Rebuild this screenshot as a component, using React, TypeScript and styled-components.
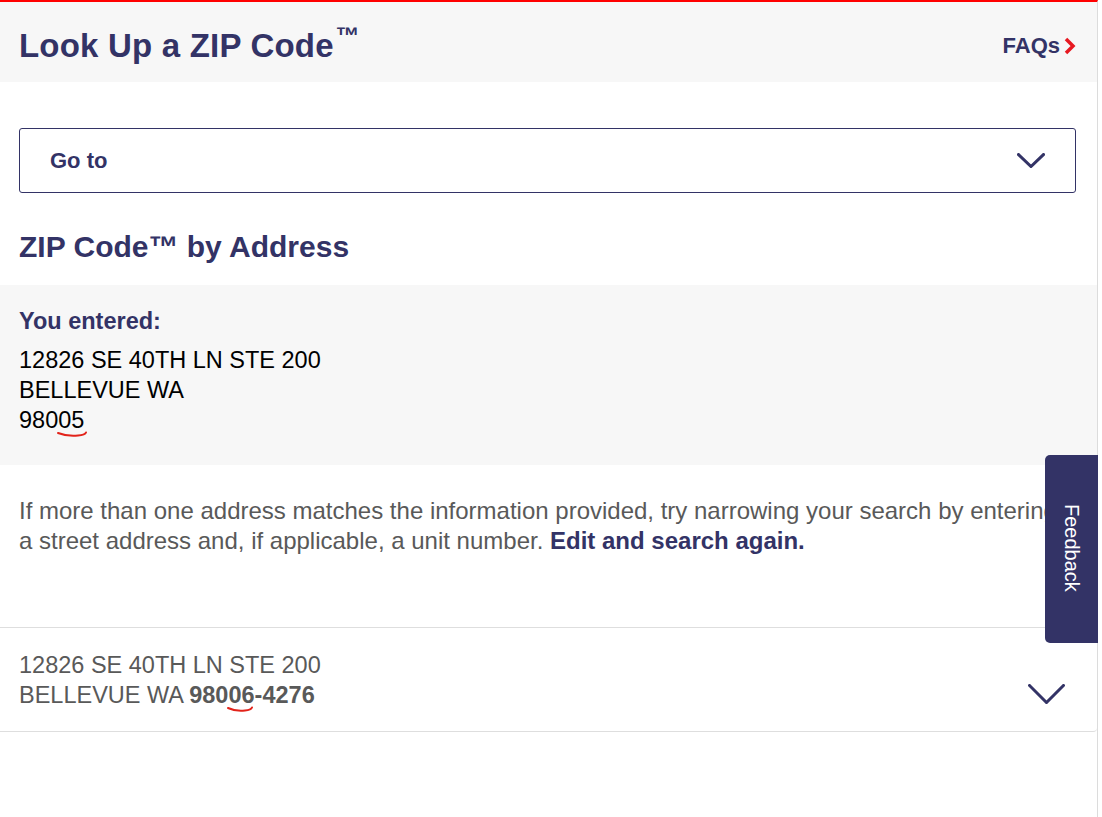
import React from "react";
import styled, { createGlobalStyle } from "styled-components";

const GlobalStyle = createGlobalStyle`
    html, body {
        margin: 0;
        padding: 0;
        background: #fff;
    }
    body {
        font-family: "Liberation Sans", Arial, sans-serif;
    }
`;

const PageCSS = styled.div`
    width: 1098px;
    min-height: 817px;
    border-right: 1px solid #dcdcdc;
    border-top: 2px solid #ff0000;
    box-sizing: border-box;
    position: relative;
`;

const HeaderCSS = styled.header`
    height: 80px;
    box-sizing: border-box;
    background: #f7f7f7;
    display: flex;
    align-items: center;
    justify-content: space-between;
    padding: 3px 20px 0 19px;
`;

const TitleCSS = styled.h1`
    margin: 0;
    font-size: 33px;
    font-weight: 700;
    color: #333366;
    letter-spacing: 0.2px;

    sup {
        font-size: 24px;
        position: relative;
        top: -1px;
        margin-left: 2px;
    }
`;

const FaqLinkCSS = styled.a`
    display: flex;
    align-items: center;
    gap: 3px;
    font-size: 22px;
    font-weight: 700;
    color: #333366;
    text-decoration: none;
    margin-top: 5px;
`;

const ContentCSS = styled.main`
    padding: 46px 21px 0 19px;
`;

const DropdownCSS = styled.div`
    height: 65px;
    border: 1px solid #333366;
    border-radius: 3px;
    box-sizing: border-box;
    display: flex;
    align-items: center;
    justify-content: space-between;
    padding: 0 30px 0 30px;
    font-size: 22px;
    font-weight: 700;
    color: #333366;
`;

const SectionTitleCSS = styled.h2`
    margin: 36px 0 20px;
    font-size: 30px;
    line-height: 36px;
    font-weight: 700;
    color: #333366;
`;

const EnteredBoxCSS = styled.section`
    background: #f7f7f7;
    margin: 0 -21px 0 -19px;
    padding: 21px 19px 30px;
`;

const LabelCSS = styled.div`
    font-size: 23.5px;
    line-height: 30px;
    font-weight: 700;
    color: #333366;
    margin-bottom: 9px;
`;

const AddressCSS = styled.div<{ $muted?: boolean }>`
    font-size: 23.5px;
    line-height: 30px;
    color: ${(p) => (p.$muted ? "#595959" : "#000")};
`;

const MarkCSS = styled.span`
    position: relative;
    display: inline-block;

    svg {
        position: absolute;
        left: -1px;
        bottom: -3px;
    }
`;

const InfoTextCSS = styled.p`
    margin: 31px 0 71px;
    font-size: 24px;
    line-height: 30px;
    color: #595959;

    a {
        color: #333366;
        font-weight: 700;
        text-decoration: none;
    }
`;

const ResultRowCSS = styled.div`
    margin: 0 -21px 0 -19px;
    padding: 22px 32px 21px 19px;
    border-top: 1px solid #dedede;
    border-bottom: 1px solid #dedede;
    border-bottom-right-radius: 4px;
    display: flex;
    align-items: center;
    justify-content: space-between;

    b {
        font-weight: 700;
    }
`;

const RowToggleCSS = styled.span`
    display: flex;
    margin-top: 28px;
`;

const FeedbackTabCSS = styled.button`
    position: absolute;
    right: -1px;
    top: 453px;
    width: 53px;
    height: 188px;
    border: none;
    border-radius: 5px 0 0 5px;
    background: #333366;
    color: #fff;
    font-family: "Liberation Sans", Arial, sans-serif;
    font-size: 20px;
    writing-mode: vertical-rl;
    display: flex;
    align-items: center;
    justify-content: center;
    padding: 0 0 2px;
    cursor: pointer;
`;

const Chevron: React.FC<{ w: number; h: number; color?: string }> = ({ w, h, color = "#333366" }) => (
    <svg width={w} height={h} viewBox={`0 0 ${w} ${h}`} fill="none">
        <polyline
            points={`1.5,1.5 ${w / 2},${h - 1.5} ${w - 1.5},1.5`}
            stroke={color}
            strokeWidth="3"
            strokeLinecap="square"
        />
    </svg>
);

const Squiggle: React.FC<{ width: number }> = ({ width }) => (
    <svg width={width + 2} height="8" viewBox={`0 0 ${width + 2} 8`} fill="none">
        <path
            d={`M1 3 Q ${width * 0.35} 6.5 ${width * 0.75} 5.5 Q ${width} 5 ${width + 1} 2.5`}
            stroke="#e2231a"
            strokeWidth="2"
            strokeLinecap="round"
        />
    </svg>
);

const App: React.FC = () => {
    return (
        <>
            <GlobalStyle />
            <PageCSS>
                <HeaderCSS>
                    <TitleCSS>
                        Look Up a ZIP Code<sup>™</sup>
                    </TitleCSS>
                    <FaqLinkCSS href="#">
                        FAQs
                        <svg width="14" height="18" viewBox="0 0 14 18" fill="none">
                            <polyline points="3,2 10,9 3,16" stroke="#e71921" strokeWidth="3.5" />
                        </svg>
                    </FaqLinkCSS>
                </HeaderCSS>
                <ContentCSS>
                    <DropdownCSS>
                        <span>Go to</span>
                        <Chevron w={28} h={15} />
                    </DropdownCSS>
                    <SectionTitleCSS>ZIP Code™ by Address</SectionTitleCSS>
                    <EnteredBoxCSS>
                        <LabelCSS>You entered:</LabelCSS>
                        <AddressCSS>
                            12826 SE 40TH LN STE 200
                            <br />
                            BELLEVUE WA
                            <br />
                            980
                            <MarkCSS>
                                05
                                <Squiggle width={28} />
                            </MarkCSS>
                        </AddressCSS>
                    </EnteredBoxCSS>
                    <InfoTextCSS>
                        If more than one address matches the information provided, try narrowing your search by
                        entering a street address and, if applicable, a unit number.{" "}
                        <a href="#">Edit and search again.</a>
                    </InfoTextCSS>
                    <ResultRowCSS>
                        <AddressCSS $muted>
                            12826 SE 40TH LN STE 200
                            <br />
                            BELLEVUE WA{" "}
                            <b>
                                980
                                <MarkCSS>
                                    06
                                    <Squiggle width={24} />
                                </MarkCSS>
                                -4276
                            </b>
                        </AddressCSS>
                        <RowToggleCSS>
                            <Chevron w={37} h={20} />
                        </RowToggleCSS>
                    </ResultRowCSS>
                </ContentCSS>
                <FeedbackTabCSS>Feedback</FeedbackTabCSS>
            </PageCSS>
        </>
    );
};

export default App;
